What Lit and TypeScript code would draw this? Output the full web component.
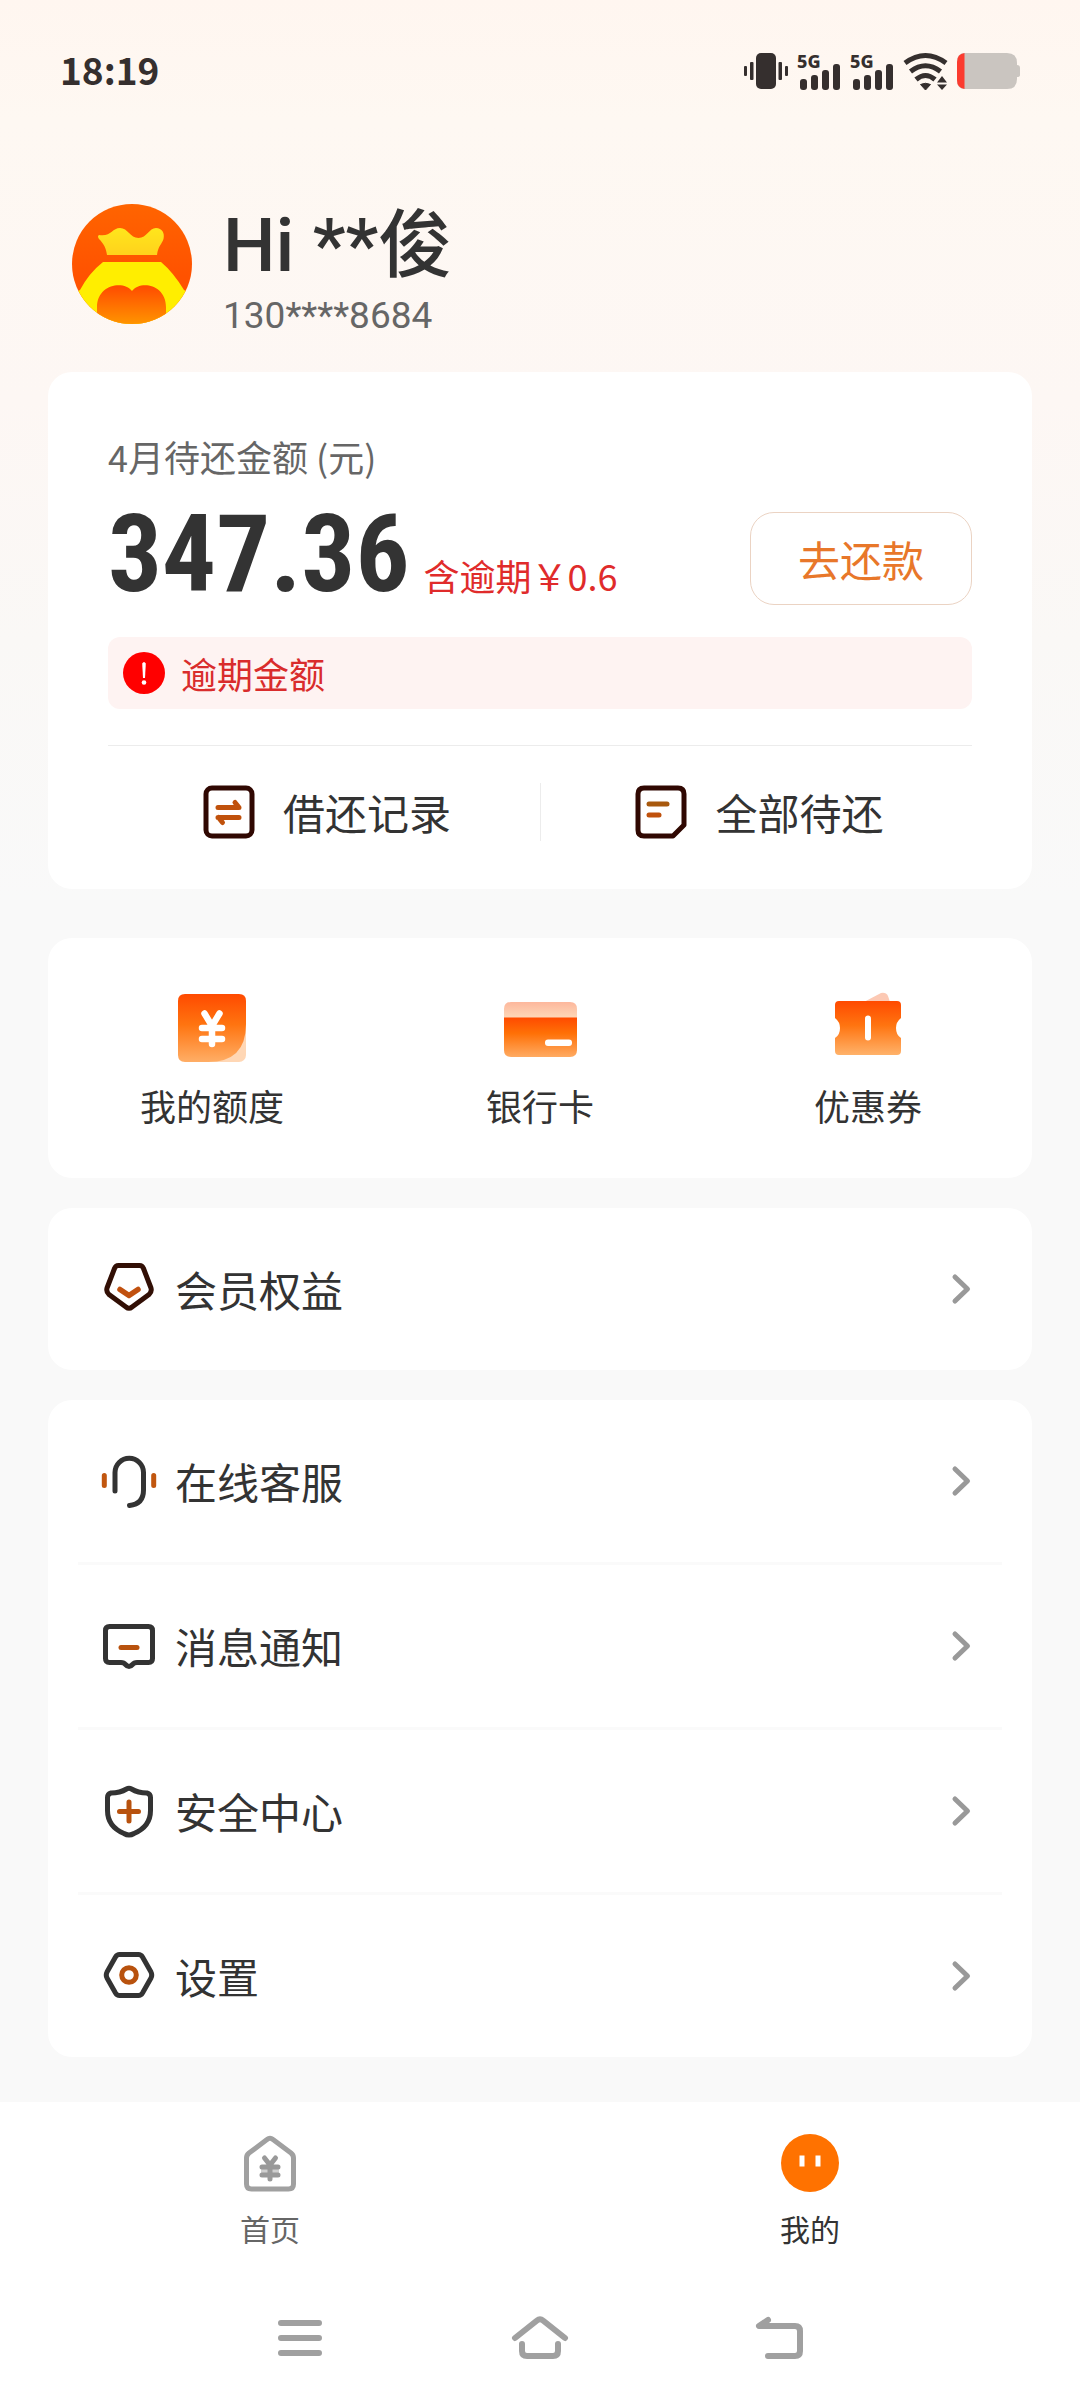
import { LitElement, html, css, svg } from "lit";
import { customElement, property } from "lit/decorators.js";

const DARK = "#352f2e";

const signal = svg`
  <text x="0" y="15" font-size="18" font-weight="800" fill=${DARK}>5G</text>
  <g fill=${DARK}>
    <rect x="3" y="26" width="7" height="11" rx="3"/>
    <rect x="14" y="22" width="7" height="15" rx="3"/>
    <rect x="25" y="17" width="7" height="20" rx="3"/>
    <rect x="36" y="11" width="7" height="26" rx="3"/>
  </g>`;

const menuIcons: Record<string, unknown> = {
  member: svg`
    <path d="M17.500 4.500H38.500Q41.500 4.500 42.500 7.500L50 27Q51 31 48 33.500L31 46Q28 48.500 25 46L8 33.500Q5 31 6 27L13.500 7.500Q14.500 4.500 17.500 4.500Z" stroke="#320f05"/>
    <path d="M19 28.500L28 34.500L37 28.500" stroke="#c1510f" stroke-width="5.500"/>`,
  service: svg`
    <path d="M14 38V19.500A14 14 0 0 1 42.500 19.500V37Q42.500 51 28.500 52.500" stroke="#333"/>
    <path d="M3.300 22.500V32.500M52.700 22.500V32.500" stroke="#c1560f"/>`,
  message: svg`
    <g transform="translate(0 1)">
      <path d="M8.500 7.500H47.500Q51.500 7.500 51.500 11.500V39.500Q51.500 43.500 47.500 43.500H36Q33 43.500 31.500 45.500Q28 49.500 24.500 45.500Q23 43.500 20 43.500H8.500Q4.500 43.500 4.500 39.500V11.500Q4.500 7.500 8.500 7.500Z" stroke="#333"/>
      <path d="M20 28.500H36" stroke="#b8520e"/>
    </g>`,
  security: svg`
    <g transform="translate(0 1.5)">
      <path d="M25.500 4.500Q28 3 30.500 4.500Q37 8.500 46 8.500Q49.500 9.500 49.500 13V26Q49.500 42 33 49Q28 52 23 49Q6.500 42 6.500 26V13Q6.500 9.500 10 8.500Q19 8.500 25.500 4.500Z" stroke="#333"/>
      <path d="M18.500 27H37.500M28 17.500V36.500" stroke="#b8520e"/>
    </g>`,
  settings: svg`
    <g transform="translate(0 1.5)">
      <path d="M18.500 5H37.500Q40 5 41.500 7.500L50 22.500Q51.500 25.500 50 28.500L41.500 43.500Q40 46 37.500 46H18.500Q16 46 14.500 43.500L6 28.500Q4.500 25.500 6 22.500L14.500 7.500Q16 5 18.500 5Z" stroke="#333"/>
      <circle cx="28" cy="25.500" r="7.300" stroke="#b8520e"/>
    </g>`,
};

@customElement("menu-row")
export class MenuRow extends LitElement {
  @property() icon = "member";
  @property() label = "";

  static styles = css`
    :host {
      display: block;
    }
    .row {
      display: flex;
      align-items: center;
      gap: 18px;
      height: 162px;
      padding: 0 60px 0 53px;
      color: #333;
      text-decoration: none;
      font-size: 42px;
      line-height: 60px;
    }
    .icon {
      width: 56px;
      height: 56px;
      fill: none;
      stroke-width: 5;
      stroke-linecap: round;
      stroke-linejoin: round;
    }
    .label {
      flex: 1;
    }
    .arrow {
      width: 22px;
      height: 32px;
      fill: none;
      stroke: #999;
      stroke-width: 5;
      stroke-linecap: round;
      stroke-linejoin: round;
    }
  `;

  render() {
    return html`
      <a class="row" href="#">
        <svg class="icon" viewBox="0 0 56 56" aria-hidden="true">${menuIcons[this.icon]}</svg>
        <span class="label">${this.label}</span>
        <svg class="arrow" viewBox="0 0 22 32" aria-hidden="true"><path d="M5 4L17.500 16L5 28"/></svg>
      </a>
    `;
  }
}

@customElement("app-root")
export class AppRoot extends LitElement {
  static styles = css`
    :host {
      display: flex;
      flex-direction: column;
      min-height: 100vh;
      color: #333;
      font-family: "Noto Sans CJK SC", "Noto Sans", sans-serif;
      background: linear-gradient(#fff6f0 0, #fef8f2 120px, #fdf7f4 400px, #faf8f6 640px, #f9f9f9 900px);
    }
    * {
      box-sizing: border-box;
    }
    a {
      color: inherit;
      text-decoration: none;
    }
    button {
      margin: 0;
      padding: 0;
      border: 0;
      background: none;
      font: inherit;
      color: inherit;
    }
    .status {
      display: flex;
      align-items: center;
      justify-content: space-between;
      height: 142px;
      padding: 0 58px 0 60px;
      color: #352f2e;
      font-size: 37px;
      font-weight: 700;
      line-height: 48px;
    }
    .clock {
      padding-bottom: 4px;
    }
    .status-icons {
      width: 280px;
      height: 56px;
      font-family: "Noto Sans", sans-serif;
    }
    .profile {
      display: flex;
      gap: 31px;
      padding: 58px 72px 32px;
      font-family: Roboto, "Noto Sans CJK SC", sans-serif;
    }
    .avatar {
      width: 120px;
      height: 120px;
      margin-top: 4px;
    }
    .name {
      margin: 0;
      font-size: 74px;
      font-weight: 500;
      line-height: 92px;
    }
    .phone {
      margin: 0;
      color: #666;
      font-size: 37px;
      line-height: 48px;
    }
    main {
      flex: 1;
      display: flex;
      flex-direction: column;
      gap: 30px;
      padding: 0 48px;
    }
    .card {
      border-radius: 24px;
      background: #fff;
    }
    .bill {
      margin-bottom: 19px;
      padding: 60px 60px 48px;
    }
    .bill-label {
      margin: 0;
      color: #666;
      font-size: 36px;
      line-height: 48px;
    }
    .bill-row {
      display: flex;
      align-items: center;
      justify-content: space-between;
      margin-top: 32px;
    }
    .amounts {
      display: flex;
      align-items: baseline;
      gap: 14px;
      margin: 0;
      padding-bottom: 4px;
    }
    .amount {
      font-family: "Roboto Condensed", "Liberation Sans Narrow", "Noto Sans CJK SC", sans-serif;
      font-size: 107px;
      font-weight: 700;
      line-height: 80px;
    }
    .overdue {
      color: #e02b2b;
      font-size: 36px;
      line-height: 48px;
    }
    .pay {
      width: 222px;
      height: 93px;
      border: 1px solid #ebd3c3;
      border-radius: 24px;
      color: #e8772a;
      font-size: 42px;
      line-height: 60px;
    }
    .alert {
      display: flex;
      align-items: center;
      gap: 16px;
      height: 72px;
      margin: 32px 0 36px;
      padding: 0 15px;
      border-radius: 12px;
      background: #fef3f2;
      color: #d92c2c;
      font-size: 36px;
      line-height: 48px;
    }
    .alert-icon {
      width: 42px;
      height: 42px;
    }
    .links {
      display: grid;
      grid-template-columns: 1fr 1fr;
      padding-top: 37px;
      border-top: 1px solid #ececec;
    }
    .link {
      display: flex;
      align-items: center;
      justify-content: center;
      gap: 28px;
      height: 58px;
      padding-left: 6px;
      font-size: 42px;
      line-height: 58px;
    }
    .link + .link {
      border-left: 1px solid #ececec;
    }
    .link-icon {
      width: 52px;
      height: 54px;
      fill: none;
      stroke-width: 5;
      stroke-linecap: round;
      stroke-linejoin: round;
    }
    .shortcuts {
      display: grid;
      grid-template-columns: 1fr 1fr 1fr;
      padding: 52px 0 48px;
    }
    .shortcut {
      display: flex;
      flex-direction: column;
      align-items: center;
      gap: 14px;
      font-size: 36px;
      line-height: 50px;
    }
    .shortcut-icon {
      width: 76px;
      height: 76px;
    }
    .line {
      height: 3px;
      margin: 0 30px;
      border: 0;
      background: #fafafa;
    }
    .tabs {
      display: grid;
      grid-template-columns: 1fr 1fr;
      margin-top: 44px;
      padding-top: 28px;
      background: #fff;
    }
    .tab {
      display: flex;
      flex-direction: column;
      align-items: center;
      gap: 10px;
      color: #666;
      font-size: 30px;
      line-height: 44px;
    }
    .tab.active {
      color: #333;
    }
    .tab-icon {
      width: 66px;
      height: 66px;
    }
    .system {
      display: flex;
      justify-content: center;
      padding: 58px 0 32px;
      background: #fff;
    }
    .key {
      width: 240px;
      height: 60px;
    }
    .key-icon {
      width: 60px;
      height: 60px;
      fill: none;
      stroke: #a0a0a0;
      stroke-width: 6;
      stroke-linecap: round;
      stroke-linejoin: round;
    }
  `;

  private statusIcons() {
    return html`
      <svg class="status-icons" viewBox="0 -8 280 56" role="img" aria-label="振动 5G 5G Wi-Fi">
        <g fill=${DARK}>
          <rect x="14" y="2" width="20" height="36" rx="5"/>
          <rect x="2" y="15" width="3" height="10" rx="1"/>
          <rect x="8" y="11" width="3.500" height="18" rx="1"/>
          <rect x="36.500" y="11" width="3.500" height="18" rx="1"/>
          <rect x="43" y="15" width="3" height="10" rx="1"/>
        </g>
        <g transform="translate(55 2)">${signal}</g>
        <g transform="translate(108 2)">${signal}</g>
        <g fill="none" stroke=${DARK} stroke-width="5">
          <path d="M163 12Q183.500 -3 204 12"/>
          <path d="M168.500 20.500Q183.500 9 198.500 20.500"/>
          <path d="M174 28.500Q183.500 20.500 193 28.500"/>
        </g>
        <path d="M178.500 33.500Q183.500 31 188.500 33.500L183.500 39Z" fill=${DARK} stroke=${DARK} stroke-linejoin="round"/>
        <path d="M200 25L205 31.500H195ZM200 39L205 33.500H195Z" fill=${DARK}/>
        <path d="M223 2H265Q275 2 275 12V14Q278 14 278 17V24Q278 26 275 26V28Q275 38 265 38H223Q215 38 215 29V11Q215 2 223 2Z" fill="#cac5c0"/>
        <path d="M222.500 2V38Q215 37 215 29V11Q215 3 222.500 2Z" fill="#fb3b2f"/>
      </svg>
    `;
  }

  private avatar() {
    return html`
      <svg class="avatar" viewBox="0 0 120 120" role="img" aria-label="头像">
        <defs>
          <clipPath id="face"><circle cx="60" cy="60" r="60"/></clipPath>
          <linearGradient id="crown" x2="0" y2="1"><stop stop-color="#ffe61c"/><stop offset="1" stop-color="#ffd21c"/></linearGradient>
          <linearGradient id="bg" x2="0" y2="1"><stop stop-color="#ff6400"/><stop offset=".6" stop-color="#ff5200"/></linearGradient>
          <linearGradient id="mouth" x2="0" y2="1"><stop stop-color="#ff4a00"/><stop offset="1" stop-color="#ff9400"/></linearGradient>
        </defs>
        <g clip-path="url(#face)">
          <rect width="120" height="120" fill="url(#bg)"/>
          <path d="M27 31C39 33 40 24 48 24C56 24 58 34 66.500 34C75 34 77 24 84 24C90 24 93 29 91.500 35C90 40 86 42 85 51H35C34 44 32 40 27 35Q25 32 27 31Z" fill="url(#crown)"/>
          <path d="M31 58H89Q101 68 112 86L120 90V120H0V90L8 86Q17 69 31 58Z" fill="#ffee00"/>
          <path d="M25 120V103C25 80 52 76 60 87C68 76 94 80 94 103V120Z" fill="url(#mouth)"/>
        </g>
      </svg>
    `;
  }

  render() {
    return html`
      <div class="status">
        <time class="clock">18:19</time>
        ${this.statusIcons()}
      </div>

      <header class="profile">
        ${this.avatar()}
        <div>
          <h1 class="name">Hi **俊</h1>
          <p class="phone">130****8684</p>
        </div>
      </header>

      <main>
        <section class="card bill">
          <p class="bill-label">4月待还金额 (元)</p>
          <div class="bill-row">
            <p class="amounts">
              <span class="amount">347.36</span>
              <span class="overdue">含逾期￥0.6</span>
            </p>
            <button class="pay" type="button">去还款</button>
          </div>
          <div class="alert" role="status">
            <svg class="alert-icon" viewBox="0 0 42 42" aria-hidden="true">
              <circle cx="21" cy="21" r="21" fill="#f00"/>
              <path d="M19.200 11.500Q21 8.500 22.800 11.500L22 26H20Z" fill="#fff"/>
              <circle cx="21" cy="30.500" r="2.300" fill="#fff"/>
            </svg>
            <span>逾期金额</span>
          </div>
          <nav class="links">
            <a class="link" href="#">
              <svg class="link-icon" viewBox="0 0 52 54" aria-hidden="true">
                <rect x="3" y="3" width="46" height="48" rx="6" stroke="#300802"/>
                <path d="M15 22.500H36L32 17.500M36 32.500H15M15.500 32.500L19.500 37.500" stroke="#c0510c"/>
              </svg>
              <span>借还记录</span>
            </a>
            <a class="link" href="#">
              <svg class="link-icon" viewBox="0 0 52 54" aria-hidden="true">
                <path d="M9 3H43Q49 3 49 9V40L38 51H9Q3 51 3 45V9Q3 3 9 3Z" stroke="#300802"/>
                <path d="M14 19H32" stroke="#a8590e"/>
                <path d="M14 30H24" stroke="#c0510c"/>
              </svg>
              <span>全部待还</span>
            </a>
          </nav>
        </section>

        <nav class="card shortcuts">
          <a class="shortcut" href="#">
            <svg class="shortcut-icon" viewBox="0 0 76 76" aria-hidden="true">
              <defs>
                <linearGradient id="fire" x2="0" y2="1"><stop stop-color="#ff4a00"/><stop offset=".45" stop-color="#ff7410"/><stop offset="1" stop-color="#ffae66"/></linearGradient>
              </defs>
              <rect x="28" y="28" width="44" height="44" rx="7" fill="#ffd7b5"/>
              <path d="M11 4H65Q72 4 72 11V34Q72 72 34 72H11Q4 72 4 65V11Q4 4 11 4Z" fill="url(#fire)"/>
              <path d="M30.500 23.500L38 36L45.500 23.500M38 36V54M28 38H48M28 49H48" fill="none" stroke="#fff" stroke-width="6.500" stroke-linecap="round"/>
            </svg>
            <span>我的额度</span>
          </a>
          <a class="shortcut" href="#">
            <svg class="shortcut-icon" viewBox="0 0 76 76" aria-hidden="true">
              <defs>
                <linearGradient id="card" x2="0" y2="1"><stop stop-color="#ff4a00"/><stop offset=".4" stop-color="#ff7006"/><stop offset="1" stop-color="#ffab62"/></linearGradient>
                <linearGradient id="strip" x2="0" y2="1"><stop stop-color="#fdb79c"/><stop offset="1" stop-color="#fdd8b8"/></linearGradient>
              </defs>
              <path d="M2 28V19Q2 12 9 12H68Q75 12 75 19V28Z" fill="url(#strip)"/>
              <path d="M2 27.500H75V60Q75 67 68 67H9Q2 67 2 60Z" fill="url(#card)"/>
              <rect x="43" y="49.500" width="27" height="6.500" rx="3" fill="#fff"/>
            </svg>
            <span>银行卡</span>
          </a>
          <a class="shortcut" href="#">
            <svg class="shortcut-icon" viewBox="0 0 76 76" aria-hidden="true">
              <defs>
                <linearGradient id="ticket" x2="0" y2="1"><stop stop-color="#ff4a00"/><stop offset=".45" stop-color="#ff7410"/><stop offset="1" stop-color="#ffb26a"/></linearGradient>
              </defs>
              <path d="M32 13L51 3Q56 2 58 6L61 15Z" fill="#fcc9b4"/>
              <path d="M9 11H67Q71 11 71 15V28Q66 32 66 38Q66 45 71 48V61Q71 65 67 65H9Q5 65 5 61V48Q10 45 10 38Q10 32 5 28V15Q5 11 9 11Z" fill="url(#ticket)"/>
              <path d="M38 28.500V47.500" stroke="#fff" stroke-width="6" stroke-linecap="round"/>
            </svg>
            <span>优惠券</span>
          </a>
        </nav>

        <section class="card">
          <menu-row icon="member" label="会员权益"></menu-row>
        </section>

        <section class="card">
          <menu-row icon="service" label="在线客服"></menu-row>
          <hr class="line" />
          <menu-row icon="message" label="消息通知"></menu-row>
          <hr class="line" />
          <menu-row icon="security" label="安全中心"></menu-row>
          <hr class="line" />
          <menu-row icon="settings" label="设置"></menu-row>
        </section>
      </main>

      <nav class="tabs">
        <a class="tab" href="#">
          <svg class="tab-icon" viewBox="0 0 66 66" fill="none" stroke="#a0a0a0" stroke-linejoin="round" stroke-linecap="round" aria-hidden="true">
            <path d="M30 9.500Q33 7 36 9.500L54 23Q56.500 25 56.500 28V54Q56.500 59 51.500 59H14.500Q9.500 59 9.500 54V28Q9.500 25 12 23Z" stroke-width="5"/>
            <path d="M24 37H42V45H24Z" fill="#cfcfcf" stroke="none"/>
            <path d="M27.500 28L33 35L38.500 28M33 35V49M25 37H41M25 45H41" stroke="#999" stroke-width="5"/>
          </svg>
          <span>首页</span>
        </a>
        <a class="tab active" href="#" aria-current="page">
          <svg class="tab-icon" viewBox="0 0 66 66" aria-hidden="true">
            <circle cx="33" cy="33" r="29" fill="#ff7200"/>
            <path d="M25 25.500V36.500M41 25.500V36.500" stroke="#fff" stroke-width="5"/>
          </svg>
          <span>我的</span>
        </a>
      </nav>

      <div class="system">
        <button class="key" type="button" aria-label="菜单">
          <svg class="key-icon" viewBox="0 0 60 60"><path d="M11 15H49M11 30H49M11 45H49"/></svg>
        </button>
        <button class="key" type="button" aria-label="主屏幕">
          <svg class="key-icon" viewBox="0 0 60 60"><path d="M5 30L27 12.500Q30 10 33 12.500L55 30M12 36V43Q12 48 17 48H43Q48 48 48 43V36"/></svg>
        </button>
        <button class="key" type="button" aria-label="返回">
          <svg class="key-icon" viewBox="0 0 60 60"><path d="M18 12L9 18H45Q50 18 50 23V43Q50 48 45 48H18"/></svg>
        </button>
      </div>
    `;
  }
}
